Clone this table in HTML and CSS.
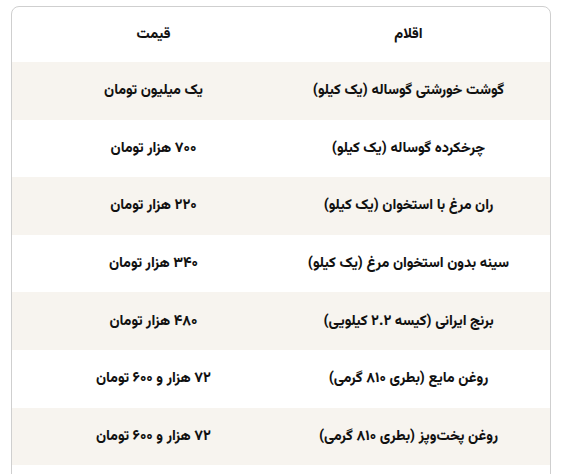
FILE: index.html
```html
<!DOCTYPE html>
<html lang="fa" dir="rtl">
<head>
<meta charset="utf-8">
<title>قیمت اقلام</title>
<link rel="stylesheet" href="styles.css">
</head>
<body>
<div class="card">
  <div class="row head">
    <div class="cell">اقلام</div>
    <div class="cell">قیمت</div>
  </div>
  <div class="row odd">
    <div class="cell">گوشت خورشتی گوساله (یک کیلو)</div>
    <div class="cell">یک میلیون تومان</div>
  </div>
  <div class="row">
    <div class="cell">چرخکرده گوساله (یک کیلو)</div>
    <div class="cell">۷۰۰ هزار تومان</div>
  </div>
  <div class="row odd">
    <div class="cell">ران مرغ با استخوان (یک کیلو)</div>
    <div class="cell">۲۲۰ هزار تومان</div>
  </div>
  <div class="row">
    <div class="cell">سینه بدون استخوان مرغ (یک کیلو)</div>
    <div class="cell">۳۴۰ هزار تومان</div>
  </div>
  <div class="row odd">
    <div class="cell">برنج ایرانی (کیسه ۲.۲ کیلویی)</div>
    <div class="cell">۴۸۰ هزار تومان</div>
  </div>
  <div class="row">
    <div class="cell">روغن مایع (بطری ۸۱۰ گرمی)</div>
    <div class="cell">۷۲ هزار و ۶۰۰ تومان</div>
  </div>
  <div class="row odd">
    <div class="cell">روغن پخت‌وپز (بطری ۸۱۰ گرمی)</div>
    <div class="cell">۷۲ هزار و ۶۰۰ تومان</div>
  </div>
</div>
</body>
</html>
```
FILE: styles.css
```css
html, body {
  margin: 0;
  padding: 0;
  background: #ffffff;
}
body {
  padding: 6px 14px 0 11px;
  font-family: "Vazirmatn", "Noto Sans Arabic", "DejaVu Sans", sans-serif;
  color: #111111;
  overflow: hidden;
}
.card {
  border: 1px solid #cfcfcf;
  border-radius: 8px;
  background: #ffffff;
  padding-bottom: 30px;
}
.row {
  display: grid;
  grid-template-columns: 1fr 1fr;
  align-items: center;
  padding: 0 14px;
  height: 57.6px;
}
.row.head {
  height: 55px;
}
.row.odd {
  background: #f7f4ef;
}
.cell {
  text-align: center;
  font-size: 14.4px;
  font-weight: 800;
  white-space: nowrap;
}
```
